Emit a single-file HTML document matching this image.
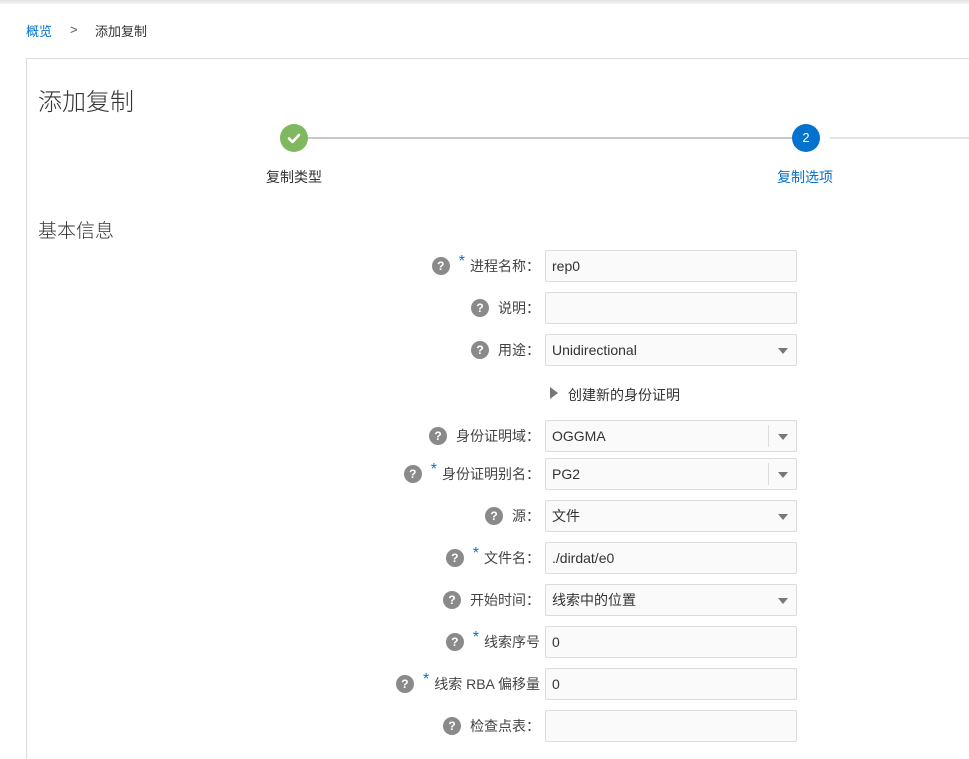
<!DOCTYPE html>
<html><head><meta charset="utf-8"><style>
*{margin:0;padding:0;box-sizing:border-box}
html,body{width:969px;height:759px;overflow:hidden}
body{background:#fff;font-family:"Liberation Sans","Noto Sans CJK SC",sans-serif;color:#333;position:relative}
.top{position:absolute;left:0;top:0;width:969px;height:4px;background:linear-gradient(#e0e0e0,#f6f6f6)}
.abs{position:absolute}
.panel{position:absolute;left:26px;top:58px;width:943px;height:701px;border-left:1px solid #ddd;border-top:1px solid #ddd}
.lbl{position:absolute;right:429px;height:32px;display:flex;align-items:center;font-size:14px;color:#444;white-space:nowrap}
.q{width:18px;height:18px;border-radius:50%;background:#8a8a8a;color:#fff;font-size:12px;font-weight:bold;display:inline-flex;align-items:center;justify-content:center;margin-right:9px}
.st{color:#0572ce;font-size:16px;margin-right:5px;position:relative;top:-4px}
.in{position:absolute;left:545px;width:252px;height:32px;border:1px solid #dcdcdc;border-radius:2px;background:#fafafa;font-size:14px;color:#333;padding-left:6px;line-height:31px}
.arr{position:absolute;right:8px;top:13px;width:0;height:0;border-left:5px solid transparent;border-right:5px solid transparent;border-top:6px solid #777}
.sep{position:absolute;right:27px;top:4px;width:1px;height:22px;background:#ddd}
</style></head><body>
<div class="top"></div>
<div class="abs" style="left:26px;top:21px;font-size:13px;color:#0572ce">概览</div>
<div class="abs" style="left:70px;top:22px;font-size:13px;color:#555">&gt;</div>
<div class="abs" style="left:95px;top:21px;font-size:13px;color:#333">添加复制</div>
<div class="panel"></div>
<div class="abs" style="left:38px;top:82px;font-size:24px;color:#333;font-weight:300">添加复制</div>
<div class="abs" style="left:308px;top:137px;width:484px;height:2px;background:#c8c8c8"></div>
<div class="abs" style="left:830px;top:137px;width:139px;height:2px;background:#e4e4e4"></div>
<div class="abs" style="left:280px;top:124px;width:28px;height:28px;border-radius:50%;background:#7fb85e"><svg width="28" height="28" viewBox="0 0 28 28"><path d="M9 14.5l3.5 3.5 6.5-7" fill="none" stroke="#fff" stroke-width="2.6" stroke-linecap="round" stroke-linejoin="round"/></svg></div>
<div class="abs" style="left:792px;top:124px;width:28px;height:28px;border-radius:50%;background:#0572ce;color:#fff;font-size:13px;text-align:center;line-height:28px">2</div>
<div class="abs" style="left:266px;top:167px;font-size:14px;color:#333">复制类型</div>
<div class="abs" style="left:777px;top:167px;font-size:14px;color:#0572ce">复制选项</div>
<div class="abs" style="left:38px;top:216px;font-size:19px;color:#333;font-weight:300">基本信息</div>

<div class="lbl" style="top:250px"><span class="q">?</span><span class="st">*</span>进程名称：</div>
<div class="in" style="top:250px">rep0</div>
<div class="lbl" style="top:292px"><span class="q">?</span>说明：</div>
<div class="in" style="top:292px"></div>
<div class="lbl" style="top:334px"><span class="q">?</span>用途：</div>
<div class="in" style="top:334px">Unidirectional<span class="arr"></span></div>
<div class="abs" style="left:550px;top:387px;width:0;height:0;border-top:6px solid transparent;border-bottom:6px solid transparent;border-left:8px solid #777"></div>
<div class="abs" style="left:568px;top:385px;font-size:14px;color:#333">创建新的身份证明</div>
<div class="lbl" style="top:420px"><span class="q">?</span>身份证明域：</div>
<div class="in" style="top:420px">OGGMA<span class="sep"></span><span class="arr"></span></div>
<div class="lbl" style="top:458px"><span class="q">?</span><span class="st">*</span>身份证明别名：</div>
<div class="in" style="top:458px">PG2<span class="sep"></span><span class="arr"></span></div>
<div class="lbl" style="top:500px"><span class="q">?</span>源：</div>
<div class="in" style="top:500px">文件<span class="arr"></span></div>
<div class="lbl" style="top:542px"><span class="q">?</span><span class="st">*</span>文件名：</div>
<div class="in" style="top:542px">./dirdat/e0</div>
<div class="lbl" style="top:584px"><span class="q">?</span>开始时间：</div>
<div class="in" style="top:584px">线索中的位置<span class="arr"></span></div>
<div class="lbl" style="top:626px"><span class="q">?</span><span class="st">*</span>线索序号</div>
<div class="in" style="top:626px">0</div>
<div class="lbl" style="top:668px"><span class="q">?</span><span class="st">*</span>线索 RBA 偏移量</div>
<div class="in" style="top:668px">0</div>
<div class="lbl" style="top:710px"><span class="q">?</span>检查点表：</div>
<div class="in" style="top:710px"></div>
</body></html>
